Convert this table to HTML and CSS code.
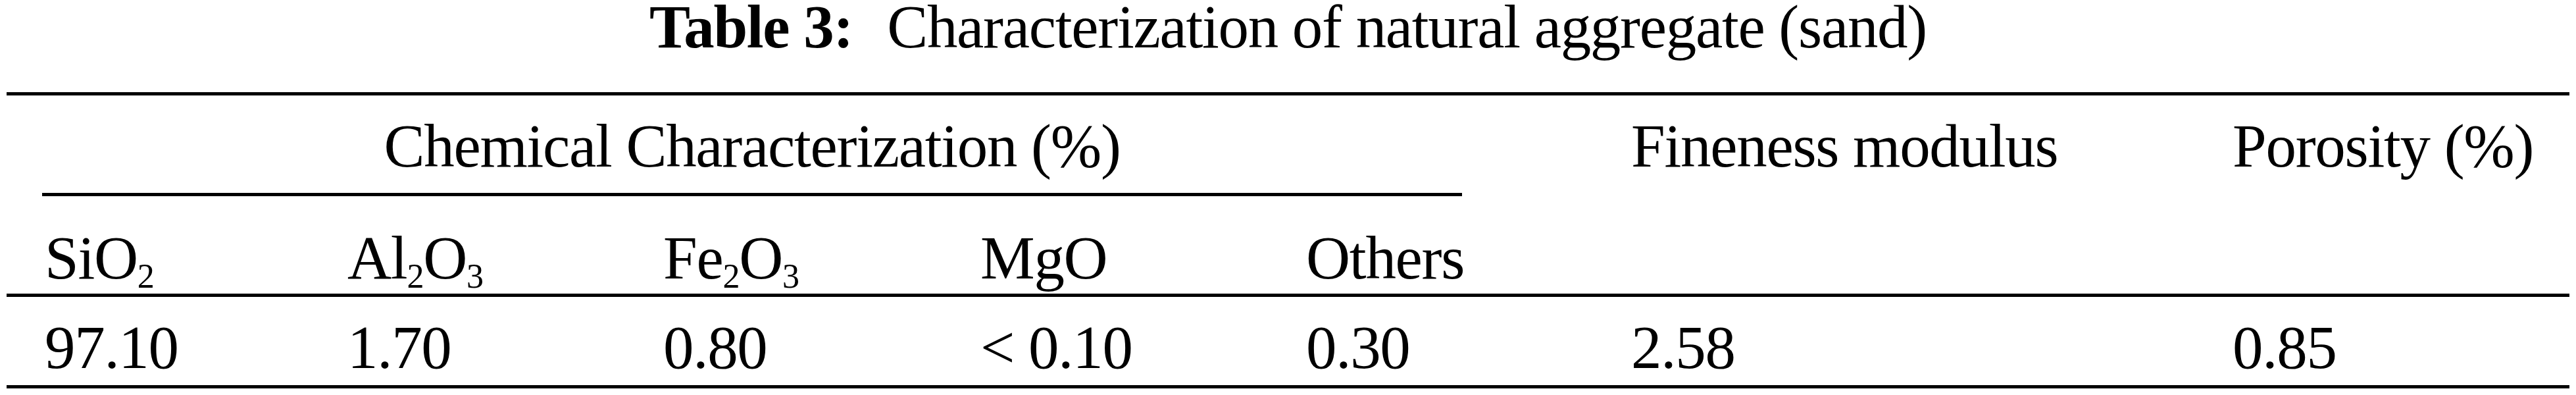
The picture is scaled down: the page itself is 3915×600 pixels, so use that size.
FILE: index.html
```html
<!DOCTYPE html>
<html lang="en">
<head>
    <meta charset="UTF-8">
    <title>Table 3 - Characterization of natural aggregate (sand)</title>
    <link rel="stylesheet" href="styles.css">
</head>
<body>
    <div class="caption">
        <span class="label">Table 3:</span>Characterization of natural aggregate (sand)
    </div>

    <table class="data-table">
        <colgroup>
            <col class="c1">
            <col class="c2">
            <col class="c3">
            <col class="c4">
            <col class="c5">
            <col class="c6">
            <col class="c7">
        </colgroup>
        <thead>
            <tr>
                <th colspan="5" class="group">
                    <div class="group-title">Chemical Characterization (%)</div>
                </th>
                <th rowspan="2" class="tall">Fineness modulus</th>
                <th rowspan="2" class="tall">Porosity (%)</th>
            </tr>
            <tr class="sub-head">
                <th>SiO<sub>2</sub></th>
                <th>Al<sub>2</sub>O<sub>3</sub></th>
                <th>Fe<sub>2</sub>O<sub>3</sub></th>
                <th>MgO</th>
                <th>Others</th>
            </tr>
        </thead>
        <tbody>
            <tr>
                <td>97.10</td>
                <td>1.70</td>
                <td>0.80</td>
                <td>&lt; 0.10</td>
                <td>0.30</td>
                <td>2.58</td>
                <td>0.85</td>
            </tr>
        </tbody>
    </table>
</body>
</html>
```

FILE: styles.css
```css
body {
    font-family: "Liberation Serif", "Times New Roman", serif;
    background-color: white;
    color: black;
    margin: 0;
    font-size: 93px;
    letter-spacing: -1.3px;
}
.caption {
    text-align: center;
    line-height: 81px;
    margin-bottom: 59px;
}
.caption .label {
    font-weight: bold;
    margin-right: 52px;
}
.data-table {
    table-layout: fixed;
    width: 3895px;
    margin: 0 10px;
    border-collapse: separate;
    border-spacing: 0;
}
.c1 { width: 460px; }
.c2 { width: 480px; }
.c3 { width: 482px; }
.c4 { width: 495px; }
.c5 { width: 494px; }
.c6 { width: 914px; }
.c7 { width: 570px; }
.data-table th,
.data-table td {
    font-weight: normal;
    text-align: left;
    vertical-align: top;
    line-height: 100px;
    white-space: nowrap;
    padding: 0 0 0 58px;
}
.data-table thead tr:first-child th {
    border-top: 5px solid black;
}
.data-table th.group {
    padding: 0;
}
.group-title {
    text-align: center;
    padding: 27px 0 21px;
    margin: 0 199px 0 54px;
    border-bottom: 5px solid black;
}
.data-table th.tall {
    padding-top: 27px;
    border-bottom: 5px solid black;
}
.sub-head th {
    padding-top: 44px;
    padding-bottom: 4px;
    border-bottom: 5px solid black;
}
.data-table td {
    padding-top: 27px;
    padding-bottom: 7px;
    border-bottom: 5px solid black;
}
sub {
    font-size: 0.56em;
    line-height: 0;
    vertical-align: -14px;
}
```
